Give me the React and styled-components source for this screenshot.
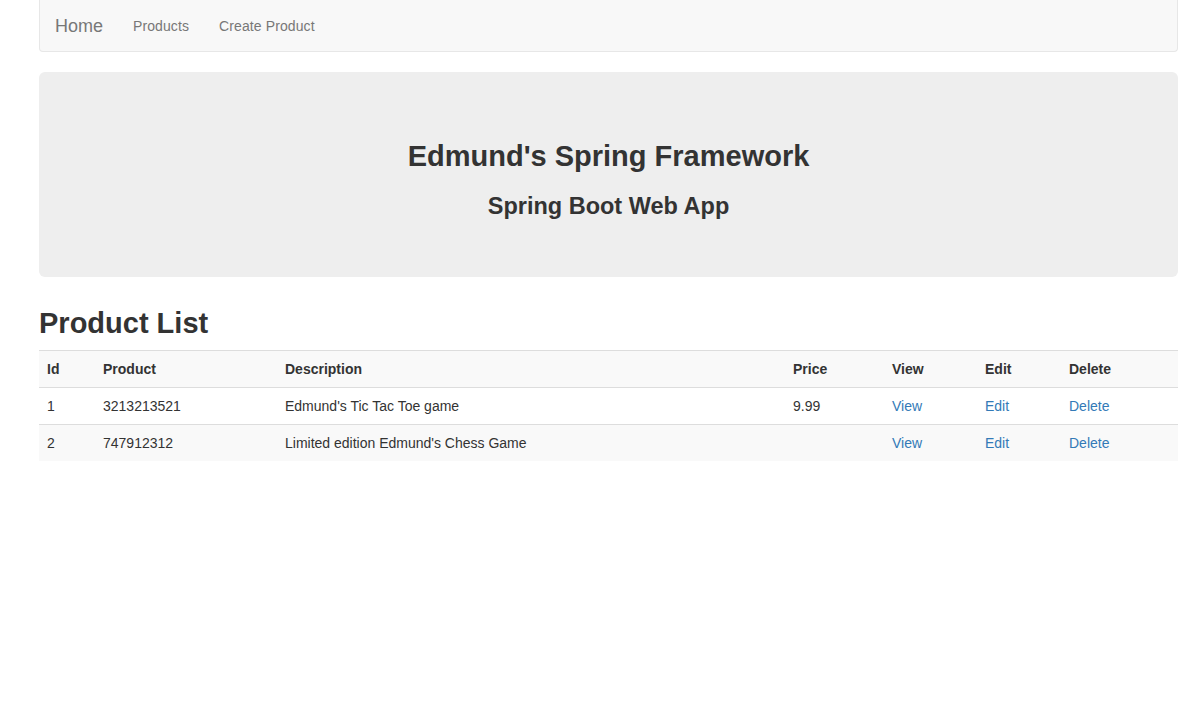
import React from "react";
import styled, { createGlobalStyle } from "styled-components";

const GlobalStyle = createGlobalStyle`
  * { box-sizing: border-box; }
  body {
    margin: 0;
    background: #fff;
    font-family: "Liberation Sans", Arial, sans-serif;
    font-size: 14px;
    line-height: 1.42857;
    color: #333;
  }
`;

const Container = styled.div`
  width: 1139px;
  margin-left: 39px;
`;

const Navbar = styled.nav`
  display: flex;
  align-items: center;
  height: 52px;
  background: #f8f8f8;
  border: 1px solid #e7e7e7;
  border-top: 0;
  border-radius: 0 0 4px 4px;
  margin-bottom: 20px;
`;

const Brand = styled.a`
  padding: 15px;
  font-size: 18px;
  line-height: 20px;
  color: #777;
  text-decoration: none;
`;

const NavLink = styled.a`
  padding: 15px;
  font-size: 14px;
  line-height: 20px;
  color: #777;
  text-decoration: none;
  letter-spacing: 0.1px;
`;

const Jumbotron = styled.div`
  background: #eee;
  border-radius: 6px;
  padding: 48px 60px;
  margin-bottom: 30px;
  text-align: center;
`;

const Title = styled.h2`
  font-size: 29px;
  font-weight: bold;
  line-height: 33px;
  margin: 20px 0 10px;
`;

const Subtitle = styled.h3`
  font-size: 23.5px;
  font-weight: bold;
  line-height: 26.4px;
  margin: 20px 0 10px;
`;

const Heading = styled.h2`
  font-size: 29px;
  font-weight: bold;
  line-height: 33px;
  margin: 0 0 10px;
`;

const Table = styled.table`
  width: 100%;
  border-collapse: collapse;
  border-spacing: 0;
  border-top: 1px solid #ddd;
`;

const Th = styled.th`
  text-align: left;
  font-weight: bold;
  padding: 8px;
  line-height: 20px;
  border-bottom: 1px solid #ddd;
  background: #f9f9f9;
`;

const Row = styled.tr`
  background: ${(p) => (p.$striped ? "#f9f9f9" : "#fff")};
`;

const Td = styled.td`
  padding: 8px;
  line-height: 20px;
  border-top: 1px solid #ddd;
  vertical-align: top;
`;

const Link = styled.a`
  color: #337ab7;
  text-decoration: none;
`;

const products = [
  { id: 1, code: "3213213521", description: "Edmund's Tic Tac Toe game", price: "9.99" },
  { id: 2, code: "747912312", description: "Limited edition Edmund's Chess Game", price: "" },
];

const widths = [56, 182, 508, 99, 93, 84, 117];

export default function App() {
  return (
    <>
      <GlobalStyle />
      <Container>
        <Navbar>
          <Brand href="#">Home</Brand>
          <NavLink href="#">Products</NavLink>
          <NavLink href="#">Create Product</NavLink>
        </Navbar>
        <Jumbotron>
          <Title>Edmund's Spring Framework</Title>
          <Subtitle>Spring Boot Web App</Subtitle>
        </Jumbotron>
        <Heading>Product List</Heading>
        <Table>
          <colgroup>
            {widths.map((w, i) => (
              <col key={i} style={{ width: w }} />
            ))}
          </colgroup>
          <thead>
            <tr>
              <Th>Id</Th>
              <Th>Product</Th>
              <Th>Description</Th>
              <Th>Price</Th>
              <Th>View</Th>
              <Th>Edit</Th>
              <Th>Delete</Th>
            </tr>
          </thead>
          <tbody>
            {products.map((p, i) => (
              <Row key={p.id} $striped={i % 2 === 1}>
                <Td>{p.id}</Td>
                <Td>{p.code}</Td>
                <Td>{p.description}</Td>
                <Td>{p.price}</Td>
                <Td><Link href="#">View</Link></Td>
                <Td><Link href="#">Edit</Link></Td>
                <Td><Link href="#">Delete</Link></Td>
              </Row>
            ))}
          </tbody>
        </Table>
      </Container>
    </>
  );
}
